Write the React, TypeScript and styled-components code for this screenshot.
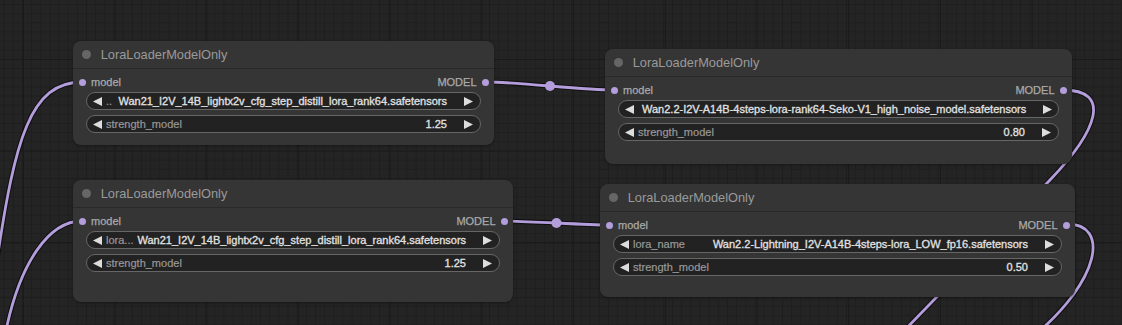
import React from "react";
import styled, { createGlobalStyle } from "styled-components";

const Global = createGlobalStyle`
  html, body { margin: 0; padding: 0; background: #232323; }
  body { font-family: "Liberation Sans", Arial, sans-serif; }
`;

const MINOR = 9.17;
const MAJOR = 91.7;

const Canvas = styled.div`
  position: relative;
  width: 1122px;
  height: 325px;
  overflow: hidden;
  background-color: #242424;
  background-image:
    linear-gradient(to right, #1a1a1a 1px, transparent 1px),
    linear-gradient(to bottom, #1a1a1a 1px, transparent 1px),
    linear-gradient(to right, #1e1e1e 1px, transparent 1px),
    linear-gradient(to bottom, #1e1e1e 1px, transparent 1px);
  background-size: ${MAJOR}px ${MAJOR}px, ${MAJOR}px ${MAJOR}px, ${MINOR}px ${MINOR}px, ${MINOR}px ${MINOR}px;
  background-position: 23px 0, 0 59px, 3.7px 4px, 3.7px 4px;
`;

const WireLayer = styled.svg`
  position: absolute;
  left: 0;
  top: 0;
  width: 1122px;
  height: 325px;
  overflow: visible;
`;

const NodeBox = styled.div<{ $x: number; $y: number; $w: number; $h: number }>`
  position: absolute;
  left: ${(p) => p.$x}px;
  top: ${(p) => p.$y}px;
  width: ${(p) => p.$w}px;
  height: ${(p) => p.$h}px;
  background: #353535;
  border-radius: 8px;
  box-shadow: 0 1px 3px rgba(0, 0, 0, 0.35);
  display: flex;
  flex-direction: column;
  box-sizing: border-box;
`;

const TitleBar = styled.div`
  height: 27.5px;
  flex-shrink: 0;
  box-sizing: border-box;
  display: flex;
  align-items: center;
  padding-left: 9.2px;
  border-bottom: 1px solid rgba(0, 0, 0, 0.22);
  color: #9a9a9a;
  font-size: 12.8px;
  white-space: nowrap;
`;

const BoxDot = styled.span`
  width: 9px;
  height: 9px;
  border-radius: 50%;
  background: #666;
  margin-right: 9.5px;
  flex-shrink: 0;
`;

const SlotRow = styled.div`
  margin-top: 4px;
  height: 19px;
  display: flex;
  align-items: center;
  justify-content: space-between;
  padding: 0 5px 0 5.5px;
  font-size: 11px;
  color: #aaa;
  -webkit-text-stroke: 0.25px currentColor;
`;

const Slot = styled.div`
  display: flex;
  align-items: center;
  gap: 5.5px;
`;

const SlotDot = styled.span`
  width: 7px;
  height: 7px;
  border-radius: 50%;
  background: #b39ddb;
  -webkit-text-stroke: 0;
`;

const WidgetStack = styled.div`
  margin-top: 0.5px;
  display: flex;
  flex-direction: column;
  gap: 4.5px;
  padding: 0 13px;
`;

const Widget = styled.div`
  height: 18.4px;
  box-sizing: border-box;
  border: 1px solid #666;
  border-radius: 9.2px;
  background: #222;
  display: flex;
  align-items: center;
  padding: 0 7px 0 6px;
  font-size: 11px;
  white-space: nowrap;
`;

const WLabel = styled.span`
  color: #999;
  margin-left: 4px;
  margin-right: 4px;
  flex-shrink: 0;
  -webkit-text-stroke: 0.2px currentColor;
`;

const WValue = styled.span`
  color: #e2e2e2;
  margin-left: auto;
  margin-right: 17px;
  flex-shrink: 0;
  -webkit-text-stroke: 0.3px currentColor;
`;

const ArrowSvg = styled.svg`
  width: 9px;
  height: 9px;
  flex-shrink: 0;
  display: block;
`;

const Arrow = ({ dir }: { dir: "left" | "right" }) => (
  <ArrowSvg viewBox="0 0 9 9">
    {dir === "left" ? (
      <polygon points="9,0 0,4.5 9,9" fill="#ddd" />
    ) : (
      <polygon points="0,0 9,4.5 0,9" fill="#ddd" />
    )}
  </ArrowSvg>
);

type W = { label?: string; value: string };
type NodeData = { x: number; y: number; w: number; h: number; widgets: W[] };

const nodes: NodeData[] = [
  {
    x: 73, y: 41, w: 421, h: 104,
    widgets: [
      { label: "..", value: "Wan21_I2V_14B_lightx2v_cfg_step_distill_lora_rank64.safetensors" },
      { label: "strength_model", value: "1.25" },
    ],
  },
  {
    x: 605, y: 49, w: 467, h: 115,
    widgets: [
      { value: "Wan2.2-I2V-A14B-4steps-lora-rank64-Seko-V1_high_noise_model.safetensors" },
      { label: "strength_model", value: "0.80" },
    ],
  },
  {
    x: 73, y: 180, w: 440, h: 122,
    widgets: [
      { label: "lora...", value: "Wan21_I2V_14B_lightx2v_cfg_step_distill_lora_rank64.safetensors" },
      { label: "strength_model", value: "1.25" },
    ],
  },
  {
    x: 600, y: 184, w: 475, h: 113,
    widgets: [
      { label: "lora_name", value: "Wan2.2-Lightning_I2V-A14B-4steps-lora_LOW_fp16.safetensors" },
      { label: "strength_model", value: "0.50" },
    ],
  },
];

const wires = [
  "M82 82 C30 82, 15 140, -3 260",
  "M82 221 C50 221, 20 260, 5 335",
  "M486 82 C518 82, 582 90, 614 90",
  "M504 221 C530 221, 583 225, 609 225",
  "M1063 90 C1112 90, 1098 130, 1050 180 L 898 337",
  "M1067 224 C1110 224, 1100 280, 1035 335",
];

const Node = ({ n }: { n: NodeData }) => (
  <NodeBox $x={n.x} $y={n.y} $w={n.w} $h={n.h}>
    <TitleBar>
      <BoxDot />
      LoraLoaderModelOnly
    </TitleBar>
    <SlotRow>
      <Slot>
        <SlotDot />
        model
      </Slot>
      <Slot>
        MODEL
        <SlotDot />
      </Slot>
    </SlotRow>
    <WidgetStack>
      {n.widgets.map((w, i) => (
        <Widget key={i}>
          <Arrow dir="left" />
          {w.label ? <WLabel>{w.label}</WLabel> : <WLabel />}
          <WValue>{w.value}</WValue>
          <Arrow dir="right" />
        </Widget>
      ))}
    </WidgetStack>
  </NodeBox>
);

export default function App() {
  return (
    <>
      <Global />
      <Canvas>
        <WireLayer viewBox="0 0 1122 325">
          {wires.map((d, i) => (
            <path key={"s" + i} d={d} fill="none" stroke="rgba(0,0,0,0.55)" strokeWidth={5} />
          ))}
          {wires.map((d, i) => (
            <path key={"c" + i} d={d} fill="none" stroke="#b39ddb" strokeWidth={2.8} />
          ))}
          <circle cx={550} cy={86} r={5} fill="#b39ddb" />
          <circle cx={556.5} cy={223} r={5} fill="#b39ddb" />
        </WireLayer>
        {nodes.map((n, i) => (
          <Node key={i} n={n} />
        ))}
      </Canvas>
    </>
  );
}
